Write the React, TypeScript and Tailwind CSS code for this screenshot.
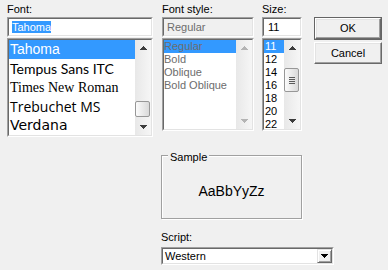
import React from "react";

const UI = "font-['Liberation_Sans',Arial,sans-serif]";

function Sunken({
  className = "",
  inner = "",
  children,
}: {
  className?: string;
  inner?: string;
  children?: React.ReactNode;
}) {
  return (
    <div
      className={`border border-t-[#a0a0a0] border-l-[#a0a0a0] border-r-white border-b-white ${className}`}
    >
      <div
        className={`w-full h-full border border-t-[#696969] border-l-[#696969] border-r-[#e3e3e3] border-b-[#e3e3e3] overflow-hidden ${inner}`}
      >
        {children}
      </div>
    </div>
  );
}

function Arrow({ up, color }: { up?: boolean; color: string }) {
  const rows = up
    ? [
        [3, 1],
        [2, 3],
        [1, 5],
        [0, 7],
      ]
    : [
        [0, 7],
        [1, 5],
        [2, 3],
        [3, 1],
      ];
  return (
    <svg width="7" height="4" viewBox="0 0 7 4" shapeRendering="crispEdges">
      {rows.map(([x, w], i) => (
        <rect key={i} x={x} y={i} width={w} height={1} fill={color} />
      ))}
    </svg>
  );
}

function ScrollBar({
  disabled,
  thumb,
  grip,
}: {
  disabled?: boolean;
  thumb?: string;
  grip?: boolean;
}) {
  const c = disabled ? "#b4b4b4" : "#3c3c3c";
  return (
    <div className="w-[16px] h-full flex flex-col shrink-0 bg-linear-to-r from-[#e8e8e8] to-[#f6f6f6]">
      <div className="h-[16px] shrink-0 flex items-center justify-center">
        <Arrow up color={c} />
      </div>
      <div className="flex-1 flex flex-col">
        {thumb && (
          <div
            className={`${thumb} w-[15px] rounded-[2px] border border-[#979797] bg-linear-to-r from-[#fbfbfb] to-[#d9d9d9] flex flex-col items-center justify-center gap-[1px]`}
          >
            {grip && (
              <>
                <div className="w-[6px] h-[1px] bg-[#5a5a5a]" />
                <div className="w-[6px] h-[1px] bg-[#5a5a5a]" />
                <div className="w-[6px] h-[1px] bg-[#5a5a5a]" />
                <div className="w-[6px] h-[1px] bg-[#5a5a5a]" />
              </>
            )}
          </div>
        )}
      </div>
      <div className="h-[16px] shrink-0 flex items-center justify-center">
        <Arrow color={c} />
      </div>
    </div>
  );
}

function Button({ children, def }: { children: React.ReactNode; def?: boolean }) {
  const face = (
    <div className="w-full h-full border border-t-white border-l-white border-r-[#696969] border-b-[#696969] shadow-[inset_-1px_-1px_0_#a0a0a0,inset_1px_1px_0_#e3e3e3] bg-[#f0f0f0] flex items-center justify-center">
      {children}
    </div>
  );
  return def ? (
    <div className="h-[23px] border border-[#646464]">{face}</div>
  ) : (
    <div className="h-[22px]">{face}</div>
  );
}

export default function App() {
  const fontRows: { name: string; cls: string; sel?: boolean }[] = [
    { name: "Tahoma", cls: "font-['Liberation_Sans',Arial,sans-serif] text-[14px]", sel: true },
    { name: "Tempus Sans ITC", cls: "font-['Lato',sans-serif] text-[14px]" },
    { name: "Times New Roman", cls: "font-['Liberation_Serif',serif] text-[14px]" },
    { name: "Trebuchet MS", cls: "font-['Open_Sans',sans-serif] text-[14px]" },
    { name: "Verdana", cls: "font-['DejaVu_Sans',sans-serif] text-[14px]" },
  ];
  const styles = ["Regular", "Bold", "Oblique", "Bold Oblique"];
  const sizes = ["11", "12", "14", "16", "18", "20", "22"];

  return (
    <div
      className={`w-[388px] h-[270px] bg-[#f0f0f0] ${UI} text-[11px] leading-[13px] text-black overflow-hidden pt-[3px] pl-[7px]`}
    >
      <div className="flex items-start">
        {/* Font */}
        <div className="w-[146px] flex flex-col">
          <div className="h-[14px]">Font:</div>
          <Sunken className="h-[20px]" inner="bg-white pl-[3px] pt-[2px]">
            <span className="bg-[#3399ff] text-white">Tahoma</span>
          </Sunken>
          <Sunken className="h-[99px] mt-[1px]" inner="bg-white flex">
            <div className="flex-1 flex flex-col">
              {fontRows.map((r) => (
                <div
                  key={r.name}
                  className={`h-[19px] leading-[19px] pl-[1px] whitespace-nowrap shrink-0 ${r.cls} ${
                    r.sel ? "bg-[#3399ff] text-white" : "text-black"
                  }`}
                >
                  {r.name}
                </div>
              ))}
            </div>
            <ScrollBar thumb="mt-[45px] h-[16px]" />
          </Sunken>
        </div>

        {/* Font style */}
        <div className="ml-[9px] w-[92px] flex flex-col">
          <div className="h-[14px]">Font style:</div>
          <Sunken className="h-[20px]" inner="bg-[#f0f0f0] text-[#6d6d6d] pl-[3px] pt-[2px]">
            Regular
          </Sunken>
          <Sunken className="h-[93px] mt-[1px]" inner="bg-white flex">
            <div className="flex-1 flex flex-col text-[#6d6d6d]">
              {styles.map((s, i) => (
                <div
                  key={s}
                  className={`h-[13px] leading-[13px] whitespace-nowrap ${
                    i === 0 ? "bg-[#3399ff]" : ""
                  }`}
                >
                  {s}
                </div>
              ))}
            </div>
            <ScrollBar disabled />
          </Sunken>
        </div>

        {/* Size */}
        <div className="ml-[8px] w-[40px] flex flex-col">
          <div className="h-[14px]">Size:</div>
          <Sunken className="h-[20px]" inner="bg-white pl-[4px] pt-[2px]">
            11
          </Sunken>
          <Sunken className="h-[93px] mt-[1px]" inner="bg-white flex">
            <div className="flex-1 flex flex-col">
              {sizes.map((s, i) => (
                <div
                  key={s}
                  className={`h-[13px] leading-[13px] pl-[1px] shrink-0 ${
                    i === 0 ? "bg-[#3399ff] text-white" : ""
                  }`}
                >
                  {s}
                </div>
              ))}
            </div>
            <ScrollBar thumb="mt-[12px] h-[24px]" grip />
          </Sunken>
        </div>

        {/* Buttons */}
        <div className="ml-[12px] w-[68px] mt-[14px] flex flex-col gap-[2px]">
          <Button def>OK</Button>
          <Button>Cancel</Button>
        </div>
      </div>

      {/* Sample + Script */}
      <div className="ml-[154px] mt-[18px] w-[173px] flex flex-col">
        <div className="relative w-[141px] h-[64px] border border-[#a0a0a0] shadow-[inset_1px_1px_0_#ffffff,1px_1px_0_#ffffff] flex items-center justify-center pt-[8px]">
          <div className="absolute -top-[5px] left-[6px] px-[2px] bg-[#f0f0f0] leading-[13px]">
            Sample
          </div>
          <div className="text-[14px] leading-[16px]">AaBbYyZz</div>
        </div>
        <div className="mt-[12px] h-[16px]">Script:</div>
        <Sunken className="h-[18px] w-[173px]" inner="bg-white flex items-center">
          <div className="flex-1 pl-[2px] leading-[13px]">Western</div>
          <div className="w-[15px] h-full border border-t-[#e3e3e3] border-l-[#e3e3e3] border-r-[#696969] border-b-[#696969] shadow-[inset_1px_1px_0_#ffffff,inset_-1px_-1px_0_#a0a0a0] bg-[#f0f0f0] flex items-center justify-center">
            <Arrow color="#000000" />
          </div>
        </Sunken>
      </div>
    </div>
  );
}
